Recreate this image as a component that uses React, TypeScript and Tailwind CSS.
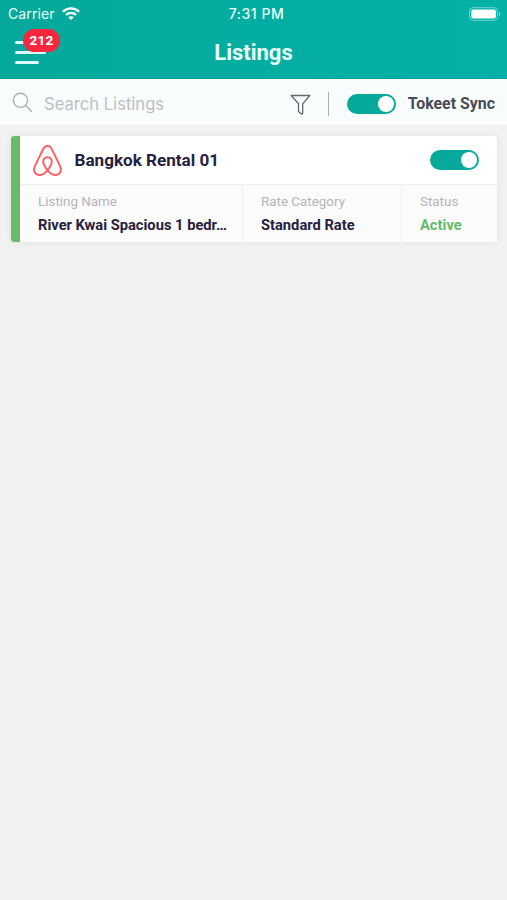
import { SiAirbnb } from "react-icons/si";

const details = [
  { label: "Listing Name", value: "River Kwai Spacious 1 bedr…", width: "w-[223px]", color: "text-[#27213f]" },
  { label: "Rate Category", value: "Standard Rate", width: "w-[159px]", color: "text-[#27213f]" },
  { label: "Status", value: "Active", width: "flex-1", color: "text-[#67bb6a]" },
];

function Toggle() {
  return (
    <button role="switch" aria-checked="true" className="flex h-5 w-[49px] shrink-0 items-center justify-end rounded-full bg-[#06a99c] pr-[2px]">
      <span className="h-4 w-4 rounded-full bg-white" />
    </button>
  );
}

function StatusBar() {
  return (
    <div className="grid h-[27px] grid-cols-3 items-center pr-[5px] pl-[8px] font-['Inter',sans-serif] text-[14px] text-[#e8fffc]">
      <div className="flex items-center gap-[7px]">
        <span className="tracking-[0.1px]">Carrier</span>
        <svg width="18" height="13" viewBox="0 0 18 13" fill="none" stroke="white" strokeWidth="2.3">
          <path d="M1 4.7C5.5.2 12.5.2 17 4.7" />
          <path d="M4 8C6.8 5.2 11.2 5.2 14 8" />
          <path d="M6.3 10.2C7.8 8.8 10.2 8.8 11.7 10.2L9 12.9Z" fill="white" stroke="none" />
        </svg>
      </div>
      <span className="pl-[3px] text-center font-medium tracking-[0.5px]">7:31 PM</span>
      <svg className="justify-self-end" width="34" height="14" viewBox="0 0 34 14" fill="none">
        <rect x="1.5" y=".7" width="28" height="12.6" rx="3.4" stroke="white" strokeOpacity=".45" />
        <rect x="3.3" y="2.5" width="24.6" height="9" rx="1.8" fill="white" />
        <path d="M31 5v4c1.7-.6 1.7-3.4 0-4Z" fill="white" fillOpacity=".55" />
      </svg>
    </div>
  );
}

function Header() {
  return (
    <header className="h-[79px] border-b border-[#079e93] bg-gradient-to-r from-[#05a99b] to-[#03b1a7]">
      <StatusBar />
      <div className="relative flex h-[50px] items-center justify-center">
        <button aria-label="Menu" className="absolute top-[14px] left-[15px]">
          <span className="flex flex-col gap-[7px]">
            <span className="h-[3px] w-6 rounded-full bg-[#dcfffb]" />
            <span className="h-[3px] w-[31px] rounded-full bg-[#dcfffb]" />
            <span className="h-[3px] w-6 rounded-full bg-[#dcfffb]" />
          </span>
          <span className="absolute -top-[12px] left-[8px] flex h-[23px] w-[37px] items-center justify-center rounded-full bg-[#f5283f] text-[13.5px] font-bold tracking-[0.2px] text-white">
            212
          </span>
        </button>
        <h1 className="text-[22px] font-bold text-[#e9fffc]">Listings</h1>
      </div>
    </header>
  );
}

function Toolbar() {
  return (
    <div className="flex h-[46px] items-center bg-[#f8fcfd] pt-[3px] pr-3 pl-[12px]">
      <svg className="-mt-[2px]" width="21" height="21" viewBox="0 0 21 21" fill="none" stroke="#adb1b3" strokeWidth="1.4" strokeLinecap="round">
        <circle cx="8.5" cy="8.3" r="7.1" />
        <path d="m13.7 13.5 5.7 5.7" />
      </svg>
      <span className="ml-[11px] flex-1 pt-px font-['Inter',sans-serif] text-[16.6px] text-[#bdc0c2]">Search Listings</span>
      <svg className="mt-[2px]" width="21" height="22" viewBox="0 0 21 22" fill="none" stroke="#656a6f" strokeWidth="1.3" strokeLinejoin="round">
        <path d="M1.2 1.5h18.6l-7.1 8.3v9.8l-1.3.5-2.9-2.7V9.8Z" />
      </svg>
      <span className="ml-[17px] h-6 w-px bg-[#a9acae]" />
      <span className="mr-[12px] ml-[18px] flex">
        <Toggle />
      </span>
      <span className="pt-px text-[15.9px] font-bold text-[#484b54]">Tokeet Sync</span>
    </div>
  );
}

function ListingCard() {
  return (
    <div className="mr-[10px] mt-[11px] ml-[11px] flex h-[105.5px] overflow-hidden rounded-[3px] bg-white shadow-[0_0_8px_rgba(0,0,0,0.07)]">
      <div className="w-[9px] shrink-0 bg-[#67bb6a]" />
      <div className="min-w-0 flex-1">
        <div className="flex h-12 items-center pr-[18.5px] pl-[12px]">
          <SiAirbnb size={31} color="#f96468" />
          <h2 className="ml-[11.5px] flex-1 pt-px text-[17.1px] font-bold text-[#27213f]">Bangkok Rental 01</h2>
          <Toggle />
        </div>
        <div className="flex h-[58px] border-t border-[#eeeeef] bg-[#fbfbfb]">
          {details.map((item) => (
            <div key={item.label} className={`${item.width} border-r border-[#f0f0f1] pt-[7px] pl-[18px] last:border-r-0`}>
              <p className="text-[13.4px] leading-[20px] text-[#b4b4b9]">{item.label}</p>
              <p className={`mt-[3px] text-[14.7px] leading-[21px] font-bold whitespace-nowrap ${item.color}`}>{item.value}</p>
            </div>
          ))}
        </div>
      </div>
    </div>
  );
}

export default function App() {
  return (
    <div className="min-h-screen w-full overflow-hidden bg-[#f2f2f2] font-['Roboto',sans-serif]">
      <Header />
      <Toolbar />
      <ListingCard />
    </div>
  );
}
